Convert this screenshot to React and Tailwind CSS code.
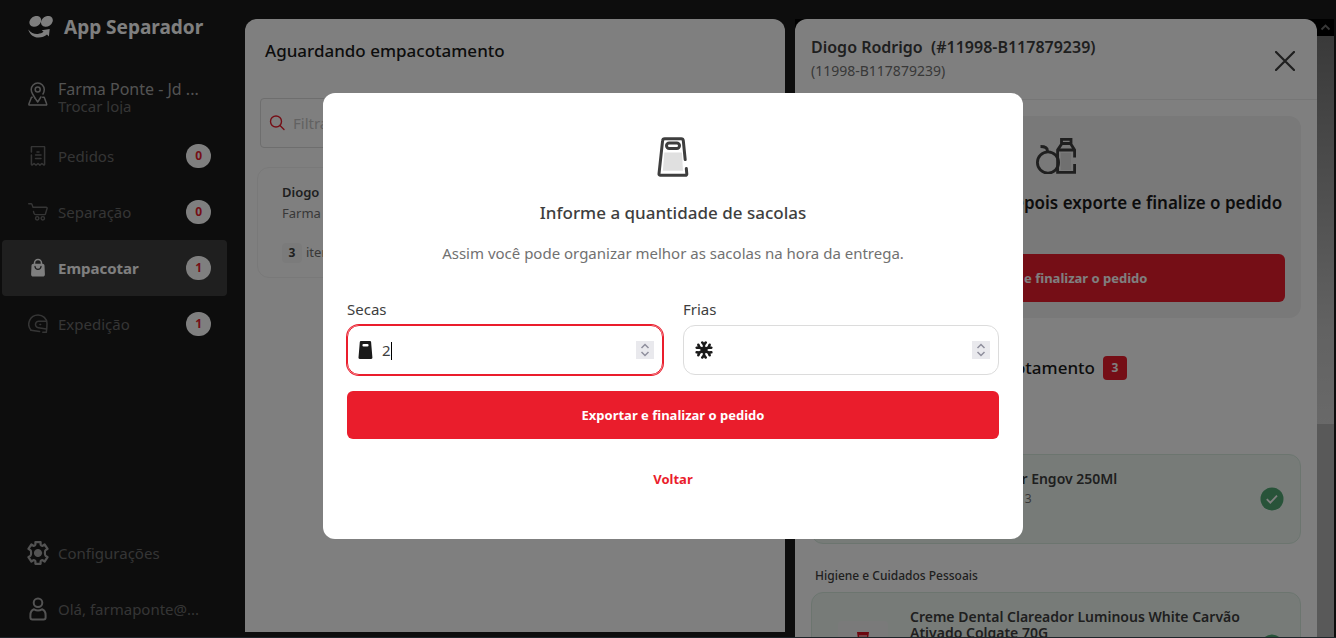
import React from "react";

const stroke = {
  fill: "none",
  stroke: "currentColor",
  strokeWidth: 1.5,
  strokeLinecap: "round",
  strokeLinejoin: "round",
};

function Logo() {
  return (
    <svg className="h-[22px] w-[26px] text-white" viewBox="0 0 26 22" fill="currentColor" aria-hidden="true">
      <ellipse cx="7.300" cy="5.400" rx="6.300" ry="5" transform="rotate(-35 7.300 5.400)" />
      <ellipse cx="18.900" cy="5.400" rx="6.300" ry="5" transform="rotate(-35 18.900 5.400)" />
      <path d="M.3 13.400c2.600 3.400 6 4.800 9.600 4.500 2.400-.2 4.300-1 5.700-2.100l-1.900-1.500 8-1.300-.8 7.400-1.900-1.800c-2.300 1.900-5 2.900-8.500 2.900C5.600 21.500 1.600 18.300.3 13.400z" />
    </svg>
  );
}

function StoreIcon() {
  return (
    <svg className="h-6 w-5" viewBox="0 0 20 24" {...stroke} strokeWidth="1.500" aria-hidden="true">
      <path d="M7.200 16.300 4.600 12C3.600 10.400 3.200 9 3.200 7.600A6.600 6.600 0 0 1 9.800 1a6.600 6.600 0 0 1 6.500 6.600c0 1.600-.4 2.900-1.300 4.400" />
      <circle cx="9.700" cy="7.400" r="2.500" />
      <path d="M7.200 16.300 9.700 20l3.200-5M4.200 15.200h-.7L.9 22.100c-.1.500.1.900.6.900h16.600c.5 0 .8-.4.6-.9l-2.500-6.900h-1.500" />
    </svg>
  );
}

function OrdersIcon() {
  return (
    <svg className="h-5 w-5" viewBox="0 0 20 20" {...stroke} strokeWidth="1.500" aria-hidden="true">
      <path d="M3.400 6V1.200c0-.4.2-.6.600-.6h12c.4 0 .6.200.6.600v17.100c0 .5-.5.800-.9.500l-1.800-1.300-2 1.600-1.900-1.600L8 19.100l-2-1.600-1.700 1.300c-.4.3-.9 0-.9-.5V9" />
      <path d="M9 6h2M7.500 9h5.500M7.500 12.500h5.500" />
    </svg>
  );
}

function CartIcon() {
  return (
    <svg className="h-5 w-5" viewBox="0 0 20 20" {...stroke} strokeWidth="1.400" aria-hidden="true">
      <path d="M.7 1.700h2.200c.6 0 1 .3 1.200.9l.8 2.600h13.300c.7 0 1.100.6.9 1.200l-1.600 5.400c-.1.500-.5.800-1 .8H7.800c-.9 0-1.600-.5-1.800-1.300l-.5-1.900" />
      <circle cx="9.200" cy="16.300" r="1.700" />
      <circle cx="14.800" cy="16.300" r="1.700" />
    </svg>
  );
}

function BagIcon() {
  return (
    <svg className="h-5 w-5 text-white" viewBox="0 0 20 20" aria-hidden="true">
      <path d="M6.500 7V5a3.500 3.500 0 0 1 7 0V7" {...stroke} />
      <path d="M5.600 5.700h8.800c1.200 0 2 .7 2.100 1.900l.4 8.600c.1 1.400-.9 2.400-2.200 2.400H5.300c-1.300 0-2.300-1-2.200-2.400l.4-8.600c.1-1.200.9-1.900 2.100-1.900z" fill="currentColor" />
      <path d="M7 8.500c.2 1.800 1.400 2.800 3 2.800s2.800-1 3-2.800" fill="none" stroke="#3f3f3f" strokeWidth="1.300" strokeLinecap="round" />
    </svg>
  );
}

function HelmetIcon() {
  return (
    <svg className="h-5 w-5" viewBox="0 0 20 20" {...stroke} strokeWidth="1.500" aria-hidden="true">
      <path d="M3 16.200A9.300 9.300 0 0 1 10 .9c4.800 0 9 3.800 9 8.700 0 3-.2 5.800-.7 8.700h-3.500" />
      <path d="M18.600 7.200h-7.400a3.300 3.300 0 0 0-.8 6.600l7.900 1.200M3 16.200l8.600 1.300M12 10.400h.6" />
    </svg>
  );
}

function GearIcon() {
  return (
    <svg className="h-6 w-6" viewBox="0 0 24 24" {...stroke} strokeWidth="2.200" aria-hidden="true">
      <path d="M9.400 1.200h5.200v2.400c0 .8 1.300 1.500 2 1.100l2-1.200 3 4.300-2 1.400c-.7.500-.7 1-.7 2.800s0 2.300.7 2.800l2 1.400-3 4.300-2-1.200c-.7-.4-2 .3-2 1.100v2.400H9.400v-2.400c0-.8-1.300-1.500-2-1.100l-2 1.200-3-4.300 2-1.400c.7-.5.700-1 .7-2.800s0-2.300-.7-2.800l-2-1.400 3-4.300 2 1.200c.7.400 2-.3 2-1.100z" />
      <circle cx="12" cy="12" r="3.600" fill="currentColor" strokeWidth="1" />
    </svg>
  );
}

function UserIcon() {
  return (
    <svg className="h-6 w-5" viewBox="0 0 20 24" {...stroke} strokeWidth="2" aria-hidden="true">
      <circle cx="10" cy="5.700" r="4.300" />
      <path d="M6 12.300c-2.200.7-3.600 3-3.600 6v2.200c0 1.200.8 2 2 2h11.200c1.200 0 2-.8 2-2v-2.200c0-3-1.400-5.300-3.600-6-2.300 1.400-5.700 1.400-8 0z" />
    </svg>
  );
}

function PaperBagIcon() {
  return (
    <svg className="h-10 w-8" viewBox="0 0 32 40" aria-hidden="true">
      <path d="M7.300 15.500h17.600L26 33.700H5.900z" fill="#e0e0e0" />
      <g fill="none" stroke="#3e3e3e" strokeWidth="3" strokeLinecap="round" strokeLinejoin="round">
        <path d="M28.200 22.600 26.300 3.700c-.1-1.200-.9-2-2.100-2H7.700c-1.200 0-2 .8-2.100 2L2 36.800c-.1.900.4 1.500 1.300 1.500h25.100c.9 0 1.500-.6 1.400-1.500l-.5-5.300" />
        <rect x="9.500" y="6" width="13" height="5.500" rx="2.700" />
      </g>
    </svg>
  );
}

function GroceriesIcon() {
  return (
    <svg className="h-9 w-10" viewBox="0 0 40 36" fill="none" stroke="#3e3e3e" strokeWidth="2.800" aria-hidden="true">
      <path d="M25 15h10v17H25z" fill="#e0e0e0" stroke="none" />
      <circle cx="12" cy="24.500" r="10.600" />
      <path d="M11.500 13c0-3-2-4.500-7-4.500" />
      <path d="M38.600 19.500V12L34.500 5.500H26L21.600 12v22.300h17V26M25.500 6V1.400H35V6M21.600 12h17" />
    </svg>
  );
}

function SmallBagIcon() {
  return (
    <svg className="h-[18px] w-4" viewBox="0 0 16 18" aria-hidden="true">
      <path fillRule="evenodd" fill="#1a1a1a" d="M3.100 0h8.700c.7 0 1.200.4 1.300 1.100l1.300 15.500c.1.800-.4 1.400-1.200 1.400H1.700c-.8 0-1.300-.6-1.200-1.400L1.800 1.100C1.900.4 2.400 0 3.100 0zm2.500 3a1.200 1.200 0 0 0 0 2.400h3.800a1.200 1.200 0 0 0 0-2.400z" />
    </svg>
  );
}

function SnowIcon() {
  return (
    <svg className="h-[18px] w-5" viewBox="-1 0 20 18" stroke="#1a1a1a" strokeWidth="2.600" strokeLinecap="round" strokeLinejoin="round" fill="none" aria-hidden="true">
      {[0, 60, 120, 180, 240, 300].map((a) => (
        <path key={a} transform={`rotate(${a} 9 9)`} d="M9 9V3M7.300 1.500 9 3.800l1.700-2.300" />
      ))}
      <circle cx="9" cy="9" r="2" fill="#1a1a1a" />
    </svg>
  );
}

function CheckIcon() {
  return (
    <svg className="h-6 w-6 shrink-0" viewBox="0 0 24 24" aria-label="Empacotado">
      <circle cx="12" cy="12" r="11.500" fill="#50a773" />
      <path d="m6.800 12.200 3.500 3.500 6.700-7" fill="none" stroke="#fff" strokeWidth="1.800" />
    </svg>
  );
}

function Nav({ icon, label, count, active }) {
  return (
    <a
      href="#"
      className={
        active
          ? "flex h-14 items-center rounded bg-[#3f3f3f] pr-4 pl-6 font-bold text-white"
          : "flex h-14 items-center rounded pr-4 pl-6 text-[#6b6b6b]"
      }
    >
      <span className="flex w-6 justify-center">{icon}</span>
      <span className="ml-2 flex-1 truncate text-[15px]">{label}</span>
      {count !== undefined && (
        <span className="flex h-6 min-w-6 items-center justify-center rounded-full bg-white px-[9px] text-xs font-bold text-[#ea1d2c]">
          {count}
        </span>
      )}
    </a>
  );
}

function Field({ id, label, icon, value, focused }) {
  return (
    <div className="flex flex-1 flex-col gap-1.5">
      <label htmlFor={id} className="text-[15px] leading-5 text-[#3e3e3e]">{label}</label>
      <div
        className={
          focused
            ? "relative flex h-[50px] items-center rounded-xl border border-[#ea1d2c] pr-2 pl-[10px] ring-1 ring-[#ea1d2c]"
            : "relative flex h-[50px] items-center rounded-xl border border-[#dcdcdc] pr-2 pl-[10px]"
        }
      >
        {icon}
        <input
          id={id}
          type="number"
          defaultValue={value}
          className="ml-2 w-full min-w-0 flex-1 [appearance:textfield] bg-transparent text-[15px] text-[#3e3e3e] outline-none [&::-webkit-inner-spin-button]:appearance-none"
        />
        {focused && <span className="absolute top-4 left-[43px] h-[18px] w-px bg-black" />}
        <span className="flex h-[18px] w-[18px] items-center justify-center bg-[#e9e9ed]">
          <svg className="h-3.5 w-2.5" viewBox="0 0 10 14" fill="none" stroke="#8f8f9d" strokeWidth="1.500" aria-hidden="true">
            <path d="m1.500 5 3.500-3.500L8.500 5M1.500 9 5 12.500 8.500 9" />
          </svg>
        </span>
      </div>
    </div>
  );
}

function Sidebar() {
  return (
    <aside className="flex w-[245px] shrink-0 flex-col pr-[18px] pl-[2px]">
      <div className="flex items-center gap-[10px] pt-[11px] pl-[26px]">
        <Logo />
        <h1 className="text-[19px] leading-8 font-bold text-white">App Separador</h1>
      </div>
      <button className="mt-[33px] mb-[14px] flex h-[38px] items-start pt-1 pl-6 text-left">
        <span className="flex w-6 justify-center pt-0.5 text-[#a6a6a6]"><StoreIcon /></span>
        <span className="ml-2 flex-1 text-[15px] leading-[18px]">
          <span className="block text-base leading-[18px] text-[#a6a6a6]">Farma Ponte - Jd ...</span>
          <span className="block h-4 overflow-hidden leading-4 text-[#6b6b6b]">Trocar loja</span>
        </span>
      </button>
      <nav>
        <Nav icon={<OrdersIcon />} label="Pedidos" count={0} />
        <Nav icon={<CartIcon />} label="Separação" count={0} />
        <Nav icon={<BagIcon />} label="Empacotar" count={1} active />
        <Nav icon={<HelmetIcon />} label="Expedição" count={1} />
      </nav>
      <div className="mt-auto">
        <Nav icon={<span className="text-[#a6a6a6]"><GearIcon /></span>} label="Configurações" />
        <Nav icon={<span className="text-[#a6a6a6]"><UserIcon /></span>} label="Olá, farmaponte@..." />
      </div>
    </aside>
  );
}

function Queue() {
  return (
    <section className="mt-[19px] mb-[5px] min-w-0 rounded-t-xl bg-white px-3">
      <h2 className="pt-[18px] pl-2 text-[17px] leading-7 font-medium text-[#1a1a1a]">Aguardando empacotamento</h2>
      <div className="mx-[3px] mt-[33px] flex h-[50px] items-center gap-2 rounded border border-[#dcdcdc] px-2">
        <svg className="h-4 w-4" viewBox="0 0 16 16" fill="none" stroke="#ea1d2c" strokeWidth="1.400" strokeLinecap="round" aria-hidden="true">
          <circle cx="7" cy="6.500" r="5.500" />
          <path d="m11 10.500 4 4" />
        </svg>
        <input aria-label="Filtrar pedidos" placeholder="Filtrar pedidos" className="flex-1 text-[15px] outline-none placeholder:text-[#c4c4c4]" />
      </div>
      <article className="mt-[19px] rounded-xl border border-[#f2f2f2] px-6 pt-[14px] pb-[14px] text-[13px]">
        <h3 className="leading-5 font-semibold text-[#3e3e3e]">Diogo Rodrigo</h3>
        <p className="leading-[22px] text-[#717171]">Farma Ponte</p>
        <p className="mt-[19px] flex items-center gap-1 text-[#717171]">
          <span className="flex h-5 w-5 items-center justify-center rounded bg-[#f7f7f7] text-xs font-bold text-[#3e3e3e]">3</span>
          itens
        </p>
      </article>
    </section>
  );
}

function Product({ title, quantity, children }) {
  return (
    <article className="flex items-center rounded-xl border border-[#d8ebdf] bg-[#eef7f1] pr-4 pl-[26px]">
      <div className="flex h-[50px] w-[50px] shrink-0 justify-center rounded bg-[#f5f5f5] pt-[11px]">{children}</div>
      <div className="ml-[22px] flex-1 self-start pt-4">
        <h4 className="text-sm leading-4 font-semibold text-[#3e3e3e]">{title}</h4>
        {quantity && <p className="mt-1 text-xs leading-4 text-[#717171]">{quantity}</p>}
      </div>
      <CheckIcon />
    </article>
  );
}

function Order() {
  return (
    <section className="mt-[19px] mr-[2px] ml-[10px] flex min-w-0 overflow-hidden bg-black">
      <div className="min-w-0 flex-1 rounded-t-xl bg-white">
        <header className="flex h-[81px] items-center justify-between border-b border-[#ececec] pt-1 pr-5 pl-4">
          <div>
            <h2 className="text-base leading-6 font-semibold whitespace-pre text-[#3e3e3e]">Diogo Rodrigo  (#11998-B117879239)</h2>
            <p className="pb-1 text-sm leading-6 text-[#717171]">(11998-B117879239)</p>
          </div>
          <button aria-label="Fechar" className="p-0.5">
            <svg className="h-5 w-5" viewBox="0 0 20 20" fill="none" stroke="#3e3e3e" strokeWidth="2.200" strokeLinecap="round" aria-hidden="true">
              <path d="m1 1 18 18M19 1 1 19" />
            </svg>
          </button>
        </header>
        <div className="px-4">
          <div className="mt-4 flex flex-col items-center rounded-xl bg-[#f2f2f2] px-4 pt-[22px] pb-4">
            <GroceriesIcon />
            <p className="mt-4 mb-[38px] text-[17px] leading-[26px] font-semibold whitespace-nowrap text-[#1a1a1a]">Embale os produtos, depois exporte e finalize o pedido</p>
            <button className="h-12 w-full rounded-md bg-[#ea1d2c] pt-0.5 text-[13px] font-bold text-white">Exportar e finalizar o pedido</button>
          </div>
          <div className="mt-[38px] mb-[74px] flex w-[316px] items-center justify-end gap-2">
            <h3 className="text-[17px] leading-6 font-medium whitespace-nowrap text-[#1a1a1a]">Produtos para empacotamento</h3>
            <span className="flex h-6 w-6 items-center justify-center rounded bg-[#ea1d2c] text-xs font-bold text-white">3</span>
          </div>
          <div className="grid h-[90px]">
            <Product title="Bebida Hangover Engov 250Ml" quantity="Quantidade pedida: 3" />
          </div>
          <h3 className="mt-6 mb-2 pl-1 text-xs leading-4 font-medium text-[#3e3e3e]">Higiene e Cuidados Pessoais</h3>
          <div className="grid h-[108px]">
            <Product title="Creme Dental Clareador Luminous White Carvão Ativado Colgate 70G">
              <svg className="h-8 w-3" viewBox="0 0 12 32" aria-hidden="true">
                <path d="M0 0h12l-1 7v18H1V7z" fill="#d90f1e" />
                <path d="M2 4h8" stroke="#fff" />
              </svg>
            </Product>
          </div>
        </div>
      </div>
      <div className="flex w-[17px] flex-col" aria-hidden="true">
        <svg className="h-[17px] w-[17px]" viewBox="0 0 17 17" fill="none" stroke="#707070" strokeWidth="1.800"><path d="m4.500 10.500 4-4 4 4" /></svg>
        <div className="h-[388px] bg-linear-to-b from-[#747474] via-[#c4c4c4] via-75% to-[#d2d2d2]" />
        <div className="flex-1 bg-[#b2b2b2]" />
      </div>
    </section>
  );
}

function BagsDialog() {
  return (
    <div className="fixed inset-0 flex items-center justify-center bg-black/50 pb-[6px] pl-[10px]">
      <div role="dialog" aria-modal="true" aria-labelledby="bags-title" className="w-full max-w-[700px] rounded-xl bg-white px-6 pt-11 pb-9">
        <div className="flex justify-center"><PaperBagIcon /></div>
        <h2 id="bags-title" className="mt-6 text-center text-[17px] leading-6 font-medium text-[#3e3e3e]">Informe a quantidade de sacolas</h2>
        <p className="mt-4 text-center text-[15px] leading-6 text-[#717171]">Assim você pode organizar melhor as sacolas na hora da entrega.</p>
        <div className="mt-[34px] flex gap-5">
          <Field id="dry" label="Secas" icon={<SmallBagIcon />} value="2" focused />
          <Field id="cold" label="Frias" icon={<SnowIcon />} />
        </div>
        <button className="mt-4 h-12 w-full rounded-md bg-[#ea1d2c] pt-0.5 text-[13px] font-bold text-white">Exportar e finalizar o pedido</button>
        <button className="mt-4 h-12 w-full pt-0.5 text-[13px] font-bold text-[#ea1d2c]">Voltar</button>
      </div>
    </div>
  );
}

export default function App() {
  return (
    <div className="flex h-screen overflow-hidden border-b border-[#3c4a55] bg-[#1a1a1a] font-['Noto_Sans',sans-serif]">
      <Sidebar />
      <main className="grid min-w-0 flex-1 grid-cols-[540fr_551fr] grid-rows-[minmax(0,1fr)]">
        <Queue />
        <Order />
      </main>
      <BagsDialog />
    </div>
  );
}
